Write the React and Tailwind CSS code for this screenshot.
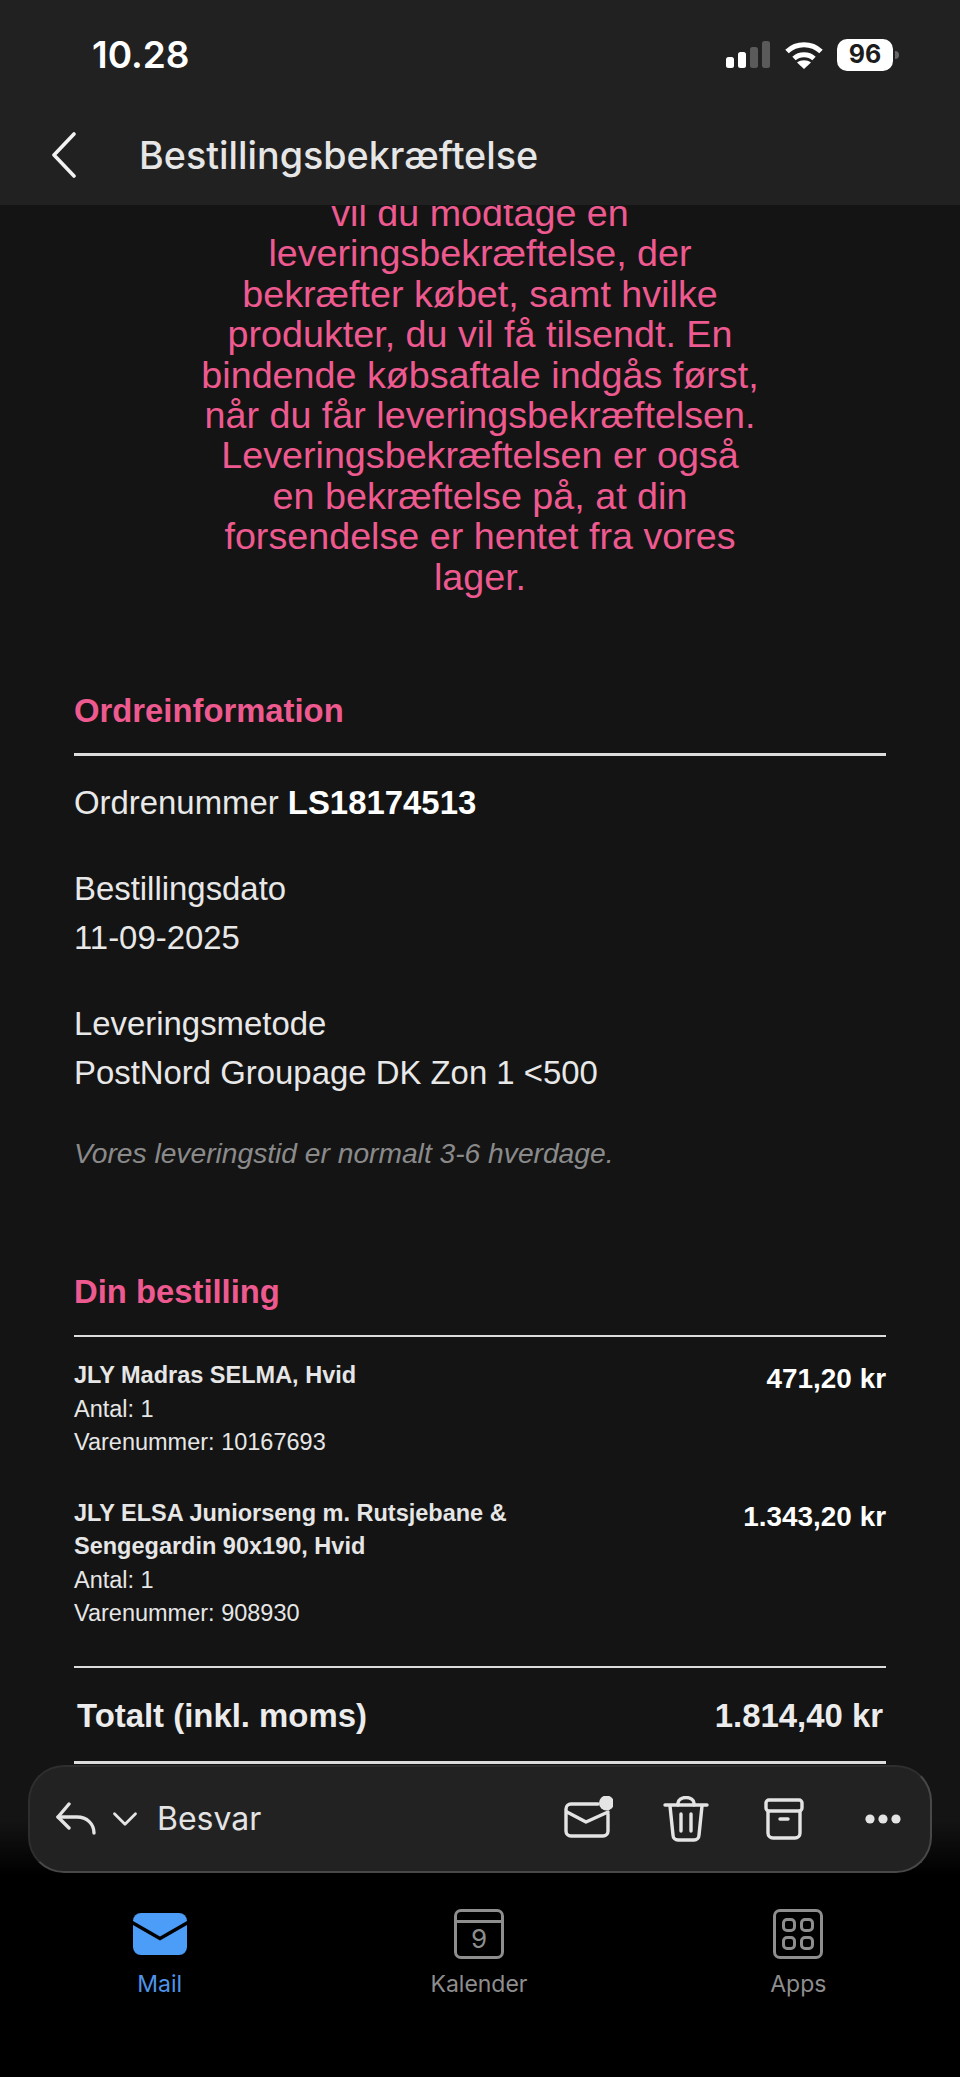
import { ChevronDown } from 'lucide-react';

const sans = "font-['Liberation_Sans',Arial,sans-serif]";
const ui = "font-['Inter','Noto_Sans',sans-serif]";

function Divider() {
  return <div className="h-[2.5px] bg-[#dcdcdc]" />;
}

function SectionTitle({ children, className }) {
  return <h2 className={`text-[32.8px] leading-[40px] font-bold text-[#ee5a90] ${className}`}>{children}</h2>;
}

function OrderItem({ name, sku, price, className }) {
  return (
    <div className={`flex justify-between ${className}`}>
      <div className="w-[500px] text-[23.5px] leading-[33.5px] text-[#e6e6e6]">
        <p className="font-bold">{name}</p>
        <p>Antal: 1</p>
        <p>Varenummer: {sku}</p>
      </div>
      <p className="mt-[3px] text-[27.9px] leading-[34px] font-bold text-white">{price}</p>
    </div>
  );
}

function StatusIcons() {
  return (
    <div className="flex items-center">
      <svg width="46" height="28" viewBox="0 0 46 28" fill="#fff">
        <rect x="0" y="16" width="8" height="11" rx="2.5" />
        <rect x="12" y="11" width="8" height="16" rx="2.5" />
        <rect x="24" y="6" width="8" height="21" rx="2.5" fill="#5a5a5a" />
        <rect x="36" y="0" width="8" height="27" rx="2.5" fill="#5a5a5a" />
      </svg>
      <svg className="ml-[12px]" width="40" height="28" viewBox="0 0 40 28" fill="none" stroke="#fff" strokeWidth="5">
        <path d="M3 10.5C12.5 1.5 27.5 1.5 37 10.5" />
        <path d="M10 17.5C15.5 12.5 24.5 12.5 30 17.5" />
        <path d="M20 28L13 21.5C17 18.5 23 18.5 27 21.5Z" fill="#fff" stroke="none" />
      </svg>
      <div className={`ml-[13px] flex h-[32px] w-[56px] items-center justify-center rounded-[10px] bg-white text-[25px] font-bold text-[#1c1c1c] ${ui}`}>96</div>
      <div className="ml-[2px] h-[8px] w-[4px] rounded-r-full bg-[#666]" />
    </div>
  );
}

function ToolbarIcons() {
  return (
    <div className="flex items-center">
      <svg width="52" height="46" viewBox="0 0 52 46" fill="none" stroke="#e4e4e4" strokeWidth="3.4" strokeLinecap="round" strokeLinejoin="round">
        <path d="M37 8H10a5 5 0 0 0-5 5v22a5 5 0 0 0 5 5h32a5 5 0 0 0 5-5V18" />
        <path d="M6 16l19 10 22-10" />
        <circle cx="45.5" cy="7" r="7.5" fill="#e4e4e4" stroke="none" />
      </svg>
      <svg className="ml-[50px]" width="46" height="46" viewBox="0 0 46 46" fill="none" stroke="#e4e4e4" strokeWidth="3.4" strokeLinecap="round" strokeLinejoin="round">
        <path d="M2 9h42" />
        <path d="M15 9V7a8 5.5 0 0 1 16 0v2" />
        <path d="M7 10l3 29a5 5 0 0 0 5 5h16a5 5 0 0 0 5-5l3-29" />
        <path d="M18 18v17M28 18v17" />
      </svg>
      <svg className="ml-[55px]" width="40" height="42" viewBox="0 0 40 42" fill="none" stroke="#e4e4e4" strokeWidth="3.4" strokeLinecap="round" strokeLinejoin="round">
        <rect x="2" y="2" width="36" height="11" rx="3" />
        <path d="M4 13v22a5 5 0 0 0 5 5h22a5 5 0 0 0 5-5V13" />
        <path d="M16 21h8" />
      </svg>
      <svg className="ml-[61px]" width="36" height="10" viewBox="0 0 36 10" fill="#e4e4e4">
        <circle cx="5" cy="5" r="4.6" />
        <circle cx="18" cy="5" r="4.6" />
        <circle cx="31" cy="5" r="4.6" />
      </svg>
    </div>
  );
}

function Tab({ label, active, children }) {
  return (
    <div className="flex flex-col items-center">
      <div className="flex h-[50px] items-center">{children}</div>
      <span className={`mt-[10px] text-[23px] leading-[30px] ${active ? 'text-[#4f93e8]' : 'text-[#8e8e8e]'}`}>{label}</span>
    </div>
  );
}

export default function App() {
  return (
    <div className={`relative flex h-[2077px] w-[960px] flex-col overflow-hidden bg-[#141414] ${ui}`}>
      <header className="relative z-10 h-[205px] shrink-0 bg-[#212121]">
        <div className="flex h-[110px] items-center justify-between pl-[92px] pr-[61px]">
          <span className="text-[37px] font-semibold text-white">10.28</span>
          <StatusIcons />
        </div>
        <div className="flex h-[90px] items-center pl-[52px]">
          <svg width="24" height="46" viewBox="0 0 24 46" fill="none" stroke="#f2f2f2" strokeWidth="3.6" strokeLinecap="round" strokeLinejoin="round">
            <path d="M22 2L2 23l20 21" />
          </svg>
          <h1 className="ml-[63px] text-[37.7px] font-medium text-[#e6e6e6]">Bestillingsbekræftelse</h1>
        </div>
      </header>

      <main className={`flex-1 overflow-hidden px-[74px] ${sans}`}>
        <p className="mx-auto -mt-[12px] w-[562px] text-center text-[37.7px] leading-[40.4px] text-[#ee5a90]">
          vil du modtage en leveringsbekræftelse, der bekræfter købet, samt hvilke produkter, du vil få tilsendt. En bindende købsaftale indgås først, når du får leveringsbekræftelsen. Leveringsbekræftelsen er også en bekræftelse på, at din forsendelse er hentet fra vores lager.
        </p>

        <SectionTitle className="mt-[94px]">Ordreinformation</SectionTitle>
        <div className="mt-[22px]"><Divider /></div>
        <div className="mt-[22px] text-[32.9px] leading-[49px] text-[#e8e8e8]">
          <p>Ordrenummer <b className="text-white">LS18174513</b></p>
          <p className="mt-[37px]">Bestillingsdato</p>
          <p>11-09-2025</p>
          <p className="mt-[37px]">Leveringsmetode</p>
          <p>PostNord Groupage DK Zon 1 &lt;500</p>
        </div>
        <p className="mt-[36px] text-[28.2px] leading-[40px] text-[#8a8a8a] italic">Vores leveringstid er normalt 3-6 hverdage.</p>

        <SectionTitle className="mt-[99px]">Din bestilling</SectionTitle>
        <div className="mt-[23px]"><Divider /></div>
        <OrderItem className="mt-[22px]" name="JLY Madras SELMA, Hvid" sku="10167693" price="471,20 kr" />
        <OrderItem className="mt-[37px]" name={<>JLY ELSA Juniorseng m. Rutsjebane &amp;<br />Sengegardin 90x190, Hvid</>} sku="908930" price="1.343,20 kr" />
        <div className="mt-[35px]"><Divider /></div>
        <div className="flex justify-between px-[3px] pt-[28px] pb-[25px] text-[32.9px] leading-[40px] font-bold text-[#ececec]">
          <span>Totalt (inkl. moms)</span>
          <span>1.814,40 kr</span>
        </div>
        <Divider />
      </main>

      {/* toolbar and tabs float over the mail body */}
      <div className="absolute inset-x-0 bottom-0 z-10 h-[312px] bg-[linear-gradient(to_bottom,transparent_55px,#000_110px)]">
        <div className="mx-[28px] flex h-[108px] items-center rounded-[36px] border-2 border-[#2e2e2e] border-r-[#484848] border-b-[#484848] bg-[#222222] pl-[25px] pr-[29px]">
          <svg width="44" height="34" viewBox="0 0 44 34" fill="none" stroke="#e4e4e4" strokeWidth="3.4" strokeLinecap="round" strokeLinejoin="round">
            <path d="M14 2L3 15l11 11" />
            <path d="M3 15h19c10 0 17 7 17 16" />
          </svg>
          <ChevronDown className="ml-[5px]" size={42} color="#e4e4e4" strokeWidth={1.6} />
          <span className="ml-[11px] text-[32px] text-[#e4e4e4]">Besvar</span>
          <div className="ml-auto"><ToolbarIcons /></div>
        </div>
        <div className="mt-[36px] grid grid-cols-3 pr-[2px]">
          <Tab label="Mail" active>
            <svg width="54" height="42" viewBox="0 0 54 42">
              <path fill="#4b9df8" d="M0 12l27 15.5L54 12v22a8 8 0 0 1-8 8H8a8 8 0 0 1-8-8Z" />
              <path fill="#4b9df8" d="M8 0h38a8 8 0 0 1 8 8L27 23.5 0 8a8 8 0 0 1 8-8Z" />
            </svg>
          </Tab>
          <Tab label="Kalender">
            <div className="relative flex h-[50px] w-[50px] items-end justify-center rounded-[7px] border-[3px] border-[#8e8e8e]">
              <div className="absolute inset-x-0 top-[8px] h-[3px] bg-[#8e8e8e]" />
              <span className="text-[26px] leading-[34px] text-[#8e8e8e]">9</span>
            </div>
          </Tab>
          <Tab label="Apps">
            <div className="grid h-[50px] w-[50px] grid-cols-2 gap-[4px] rounded-[7px] border-[3px] border-[#8e8e8e] p-[6px]">
              <div className="rounded-[5px] border-[3px] border-[#8e8e8e]" />
              <div className="rounded-[5px] border-[3px] border-[#8e8e8e]" />
              <div className="rounded-[5px] border-[3px] border-[#8e8e8e]" />
              <div className="rounded-[5px] border-[3px] border-[#8e8e8e]" />
            </div>
          </Tab>
        </div>
      </div>
    </div>
  );
}
